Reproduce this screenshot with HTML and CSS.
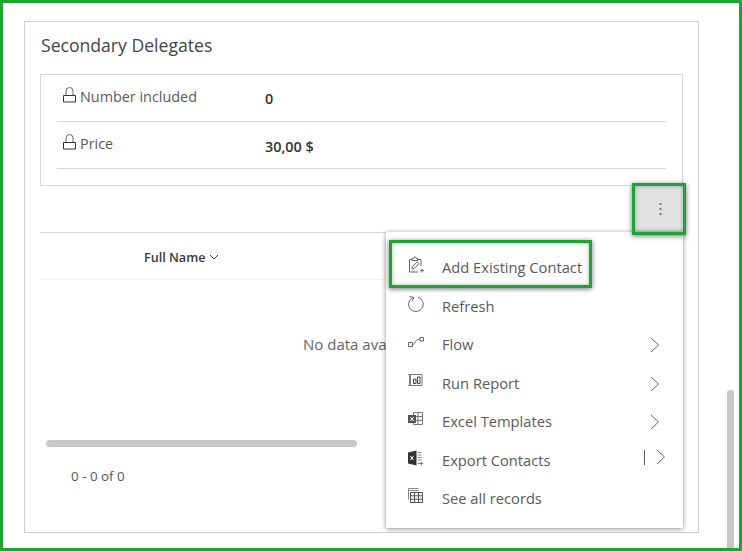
FILE: index.html
```html
<!DOCTYPE html>
<html lang="en">
<head>
<meta charset="utf-8">
<title>Secondary Delegates</title>
<link rel="stylesheet" href="styles.css">
</head>
<body>
<div class="frame">
  <section class="card">
    <h2 class="title">Secondary Delegates</h2>
    <div class="fields">
      <div class="field">
        <span class="field-label">
          <svg class="lock" width="13" height="16" viewBox="0 0 13 16"><path d="M3 8V4a3.500 3.500 0 0 1 7 0V8" fill="none" stroke="#666" stroke-width="1"/><path d="M.5 8.500h12v6.500H.5z" fill="none" stroke="#333" stroke-width="1"/></svg>
          Number included
        </span>
        <span class="field-value">0</span>
      </div>
      <div class="field">
        <span class="field-label">
          <svg class="lock" width="13" height="16" viewBox="0 0 13 16"><path d="M3 8V4a3.500 3.500 0 0 1 7 0V8" fill="none" stroke="#666" stroke-width="1"/><path d="M.5 8.500h12v6.500H.5z" fill="none" stroke="#333" stroke-width="1"/></svg>
          Price
        </span>
        <span class="field-value field-value-price">30,00 $</span>
      </div>
    </div>
    <div class="toolbar"></div>
    <div class="grid-head">
      <span class="col">Full Name
        <svg class="col-caret" width="10" height="6" viewBox="0 0 10 6"><path d="M1 1l4 4 4-4" fill="none" stroke="#444" stroke-width="1"/></svg>
      </span>
    </div>
    <div class="grid-empty">No data available</div>
    <div class="hscroll"></div>
    <div class="pager">0 - 0 of 0</div>
  </section>

  <div class="kebab">
    <svg width="3" height="14" viewBox="0 0 3 14"><rect x="0.5" y="1" width="2" height="2" fill="#777"/><rect x="0.5" y="6" width="2" height="2" fill="#777"/><rect x="0.5" y="11" width="2" height="2" fill="#777"/></svg>
  </div>

  <nav class="menu">
    <div class="menu-item">
      <svg class="mi" width="18" height="18" viewBox="0 0 18 18"><path d="M5 3.500H2.500V16H11M11 3.500h3V10" fill="none" stroke="#666"/><path d="M5 4.500V2.500h1.500a1.500 1.500 0 0 1 3 0H11v2z" fill="none" stroke="#666"/><path d="M5 13l.6-2.500 4.600-4.600 1.800 1.800-4.600 4.600z" fill="none" stroke="#666"/><path d="M13 14.500h4M15 12.500v4" stroke="#666" fill="none"/></svg>
      <span class="mt">Add Existing Contact</span>
    </div>
    <div class="menu-item">
      <svg class="mi" width="18" height="18" viewBox="0 0 18 18"><path d="M6.500 2.300a7.300 7.300 0 1 0 4.500-.1" fill="none" stroke="#666"/><path d="M2.500 1.500l4.300 1-1.600 3.600" fill="none" stroke="#666"/></svg>
      <span class="mt">Refresh</span>
    </div>
    <div class="menu-item">
      <svg class="mi" width="18" height="18" viewBox="0 0 18 18"><path d="M1.500 9.500h4v4h-4zM13 4.500h3.500V8H13z" fill="none" stroke="#666"/><path d="M5.500 11.500c2 0 2-1.500 3-3s2-2.500 4.500-2.500" fill="none" stroke="#666"/></svg>
      <span class="mt">Flow</span>
      <svg class="chev" width="10" height="16" viewBox="0 0 10 16"><path d="M1 1l7.500 7L1 15" fill="none" stroke="#666"/></svg>
    </div>
    <div class="menu-item">
      <svg class="mi" width="18" height="18" viewBox="0 0 18 18"><path d="M3.500 2.500h11.500V13.500H3.500z" fill="none" stroke="#777"/><path d="M1 2.500h4M1 13.500h4M2.500 2.500v11" fill="none" stroke="#888"/><path d="M6.500 7h2.500v4.500H6.500zM10.500 5h2.500v6.500h-2.500z" fill="none" stroke="#444"/></svg>
      <span class="mt">Run Report</span>
      <svg class="chev" width="10" height="16" viewBox="0 0 10 16"><path d="M1 1l7.500 7L1 15" fill="none" stroke="#666"/></svg>
    </div>
    <div class="menu-item">
      <svg class="mi" width="18" height="18" viewBox="0 0 18 18"><path d="M6.500 2.500h9v12h-9zM6.500 6.500h9M6.500 10.500h9M11 2.500v12" fill="none" stroke="#777"/><rect x="1" y="5" width="8" height="8" fill="#555"/><path d="M3.300 7l3.400 4M6.700 7l-3.400 4" stroke="#fff"/></svg>
      <span class="mt">Excel Templates</span>
      <svg class="chev" width="10" height="16" viewBox="0 0 10 16"><path d="M1 1l7.500 7L1 15" fill="none" stroke="#666"/></svg>
    </div>
    <div class="menu-item">
      <svg class="mi" width="18" height="18" viewBox="0 0 18 18"><path d="M1 3.500L9.500 1.500v15L1 14.500z" fill="#333"/><path d="M3.300 7l3.200 4M6.500 7l-3.200 4" stroke="#fff"/><path d="M10.500 3.500h4M10.500 6h4M10.500 8.500h4M10.500 11h4" stroke="#888" fill="none"/><path d="M11 14.500h4.500M14 13l1.500 1.500L14 16" stroke="#777" fill="none"/></svg>
      <span class="mt">Export Contacts</span>
      <span class="split"></span>
      <svg class="chev chev-split" width="10" height="16" viewBox="0 0 10 16"><path d="M1 1l7.500 7L1 15" fill="none" stroke="#666"/></svg>
    </div>
    <div class="menu-item">
      <svg class="mi" width="18" height="18" viewBox="0 0 18 18"><path d="M1.500 1.500h10M1.500 3.500h10M1.500 1.500v11" fill="none" stroke="#888"/><path d="M3.500 5.500h12v10h-12zM3.500 8.800h12M3.500 12.200h12M7.500 5.500v10M11.500 5.500v10" fill="none" stroke="#555"/></svg>
      <span class="mt">See all records</span>
    </div>
  </nav>

  <div class="mark mark-kebab"></div>
  <div class="mark mark-item"></div>
  <div class="vscroll"></div>
</div>
</body>
</html>
```
FILE: styles.css
```css
* { box-sizing: border-box; }
html, body { margin: 0; padding: 0; background: #fff; }
body { font-family: "Open Sans", "Noto Sans", sans-serif; color: #333; overflow: hidden; }

.frame {
  position: relative;
  width: 742px;
  height: 551px;
  border: 3px solid #1fa433;
  padding: 18px 0 0 21px;
  overflow: hidden;
}

.card {
  width: 675px;
  height: 512px;
  border: 1px solid #cfcfcf;
  padding: 0 15px;
}

.title {
  margin: 0;
  height: 52px;
  padding: 11px 0 0 1px;
  font-size: 17.600px;
  line-height: 24px;
  font-weight: 400;
  color: #444;
}

.fields {
  width: 643px;
  height: 112px;
  border: 1px solid #d6d6d6;
  padding: 0 16px;
}

.field {
  display: flex;
  height: 47px;
  border-bottom: 1px solid #d6d6d6;
}

.field-label {
  width: 208px;
  display: flex;
  align-items: flex-start;
  gap: 4px;
  padding: 12px 0 0 6px;
  font-size: 14.400px;
  line-height: 20px;
  color: #5a5a5a;
}

.lock { flex: none; }

.field-value {
  padding-top: 14px;
  font-size: 14.400px;
  line-height: 20px;
  font-weight: 600;
  color: #333;
}

.field-value-price { padding-top: 15px; }

.toolbar { height: 46px; }

.grid-head {
  height: 48px;
  width: 643px;
  border-top: 1px solid #d6d6d6;
  border-bottom: 1px solid #efefef;
  padding: 12px 0 0 104px;
}

.col {
  display: inline-flex;
  align-items: center;
  gap: 4px;
  font-size: 12.600px;
  line-height: 20px;
  font-weight: 600;
  color: #3a3a3a;
}

.col-caret { margin-top: -2px; }

.grid-empty {
  padding: 54px 0 0 263px;
  height: 160px;
  font-size: 15px;
  line-height: 20px;
  color: #666;
  white-space: nowrap;
}

.hscroll {
  width: 311px;
  height: 7px;
  margin-left: 6px;
  border-radius: 4px;
  background: #c8c8c8;
}

.pager {
  margin: 20px 0 0 31px;
  font-size: 13.400px;
  line-height: 18px;
  color: #555;
}

.kebab {
  position: absolute;
  left: 632px;
  top: 183px;
  width: 51px;
  height: 46px;
  background: #e1e1e1;
  display: flex;
  align-items: center;
  justify-content: center;
}

.menu {
  position: absolute;
  left: 383px;
  top: 229px;
  width: 297px;
  height: 296px;
  background: #fff;
  padding-top: 16px;
  box-shadow: 0 1px 5px rgba(0, 0, 0, 0.45);
}

.menu-item {
  position: relative;
  display: flex;
  align-items: center;
  height: 38.500px;
  padding-left: 21px;
  font-size: 14.700px;
  color: #5a5a5a;
}

.mi { flex: none; margin-top: -4px; }

.mt { margin-left: 17px; white-space: nowrap; }

.chev {
  position: absolute;
  left: 264px;
  top: 12px;
}

.chev-split { left: 270px; top: 8px; }

.split {
  position: absolute;
  left: 258px;
  top: 9px;
  width: 1px;
  height: 15px;
  background: #555;
}

.mark {
  position: absolute;
  border: 3px solid #1fa433;
  box-shadow: 0 1px 5px rgba(0, 0, 0, 0.55), inset 0 0 4px rgba(0, 0, 0, 0.3);
}

.mark-kebab {
  left: 629px;
  top: 180px;
  width: 54px;
  height: 52px;
}

.mark-item {
  left: 386px;
  top: 237px;
  width: 203px;
  height: 48px;
}

.vscroll {
  position: absolute;
  left: 724px;
  top: 387px;
  width: 7px;
  height: 170px;
  border-radius: 3px 3px 0 0;
  background: #c8c8c8;
}
```
